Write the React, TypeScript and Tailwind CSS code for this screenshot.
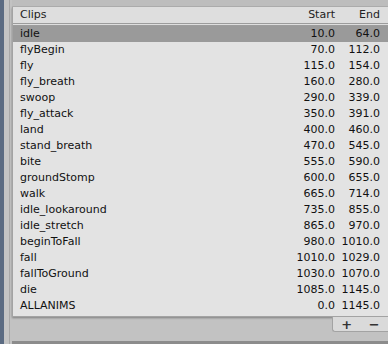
const clips: [string, string, string][] = [
  ["idle", "10.0", "64.0"],
  ["flyBegin", "70.0", "112.0"],
  ["fly", "115.0", "154.0"],
  ["fly_breath", "160.0", "280.0"],
  ["swoop", "290.0", "339.0"],
  ["fly_attack", "350.0", "391.0"],
  ["land", "400.0", "460.0"],
  ["stand_breath", "470.0", "545.0"],
  ["bite", "555.0", "590.0"],
  ["groundStomp", "600.0", "655.0"],
  ["walk", "665.0", "714.0"],
  ["idle_lookaround", "735.0", "855.0"],
  ["idle_stretch", "865.0", "970.0"],
  ["beginToFall", "980.0", "1010.0"],
  ["fall", "1010.0", "1029.0"],
  ["fallToGround", "1030.0", "1070.0"],
  ["die", "1085.0", "1145.0"],
  ["ALLANIMS", "0.0", "1145.0"],
];

export default function App() {
  return (
    <div
      className="w-[388px] h-[344px] flex bg-[#c2c2c2] overflow-hidden text-[11px] text-[#111]"
      style={{ fontFamily: '"DejaVu Sans", Verdana, sans-serif' }}
    >
      {/* left window edge */}
      <div className="w-[4px] bg-[#5b6b82] shrink-0" />
      <div className="w-[5px] bg-[#c4c4c4] shrink-0" />
      <div className="w-[1px] bg-[#a8a8a8] shrink-0" />
      <div className="w-[2px] shrink-0" />

      <div className="flex-1 flex flex-col">
        <div className="h-[7px] bg-[#bdbdbd] border-b border-[#b0b0b0]" />
        {/* list panel */}
        <div className="bg-[#e3e3e3] border border-t-0 border-[#a3a3a3] border-r-0 shadow-[0_1px_2px_rgba(0,0,0,0.35)]">
          <div className="h-[19px] flex items-center bg-[#dedede] border-b-[3px] border-double border-[#9c9c9c] text-[#222]">
            <span className="pl-[7px] flex-1">Clips</span>
            <span className="w-[50px] text-right">Start</span>
            <span className="w-[45px] text-right pr-[8px] box-content">End</span>
          </div>
          {clips.map(([name, start, end], i) => (
            <div
              key={name}
              className={
                "h-[16px] flex items-center " +
                (i === 0 ? "bg-[#9a9a9a]" : "")
              }
            >
              <span className="pl-[7px] flex-1">{name}</span>
              <span className="w-[50px] text-right">{start}</span>
              <span className="w-[45px] text-right pr-[8px] box-content">{end}</span>
            </div>
          ))}
          <div className="h-[2px]" />
        </div>
        {/* footer */}
        <div className="flex justify-end">
          <div className="w-[56px] h-[15px] flex items-center justify-around bg-[#dadada] border border-t-0 border-r-0 border-[#a3a3a3] rounded-bl-[3px] text-[13px] font-bold text-[#333] leading-none">
            <span>+</span>
            <span>−</span>
          </div>
        </div>
        <div className="flex-1" />
        <div className="h-[3px] bg-[#8c8c8c]" />
      </div>
    </div>
  );
}
